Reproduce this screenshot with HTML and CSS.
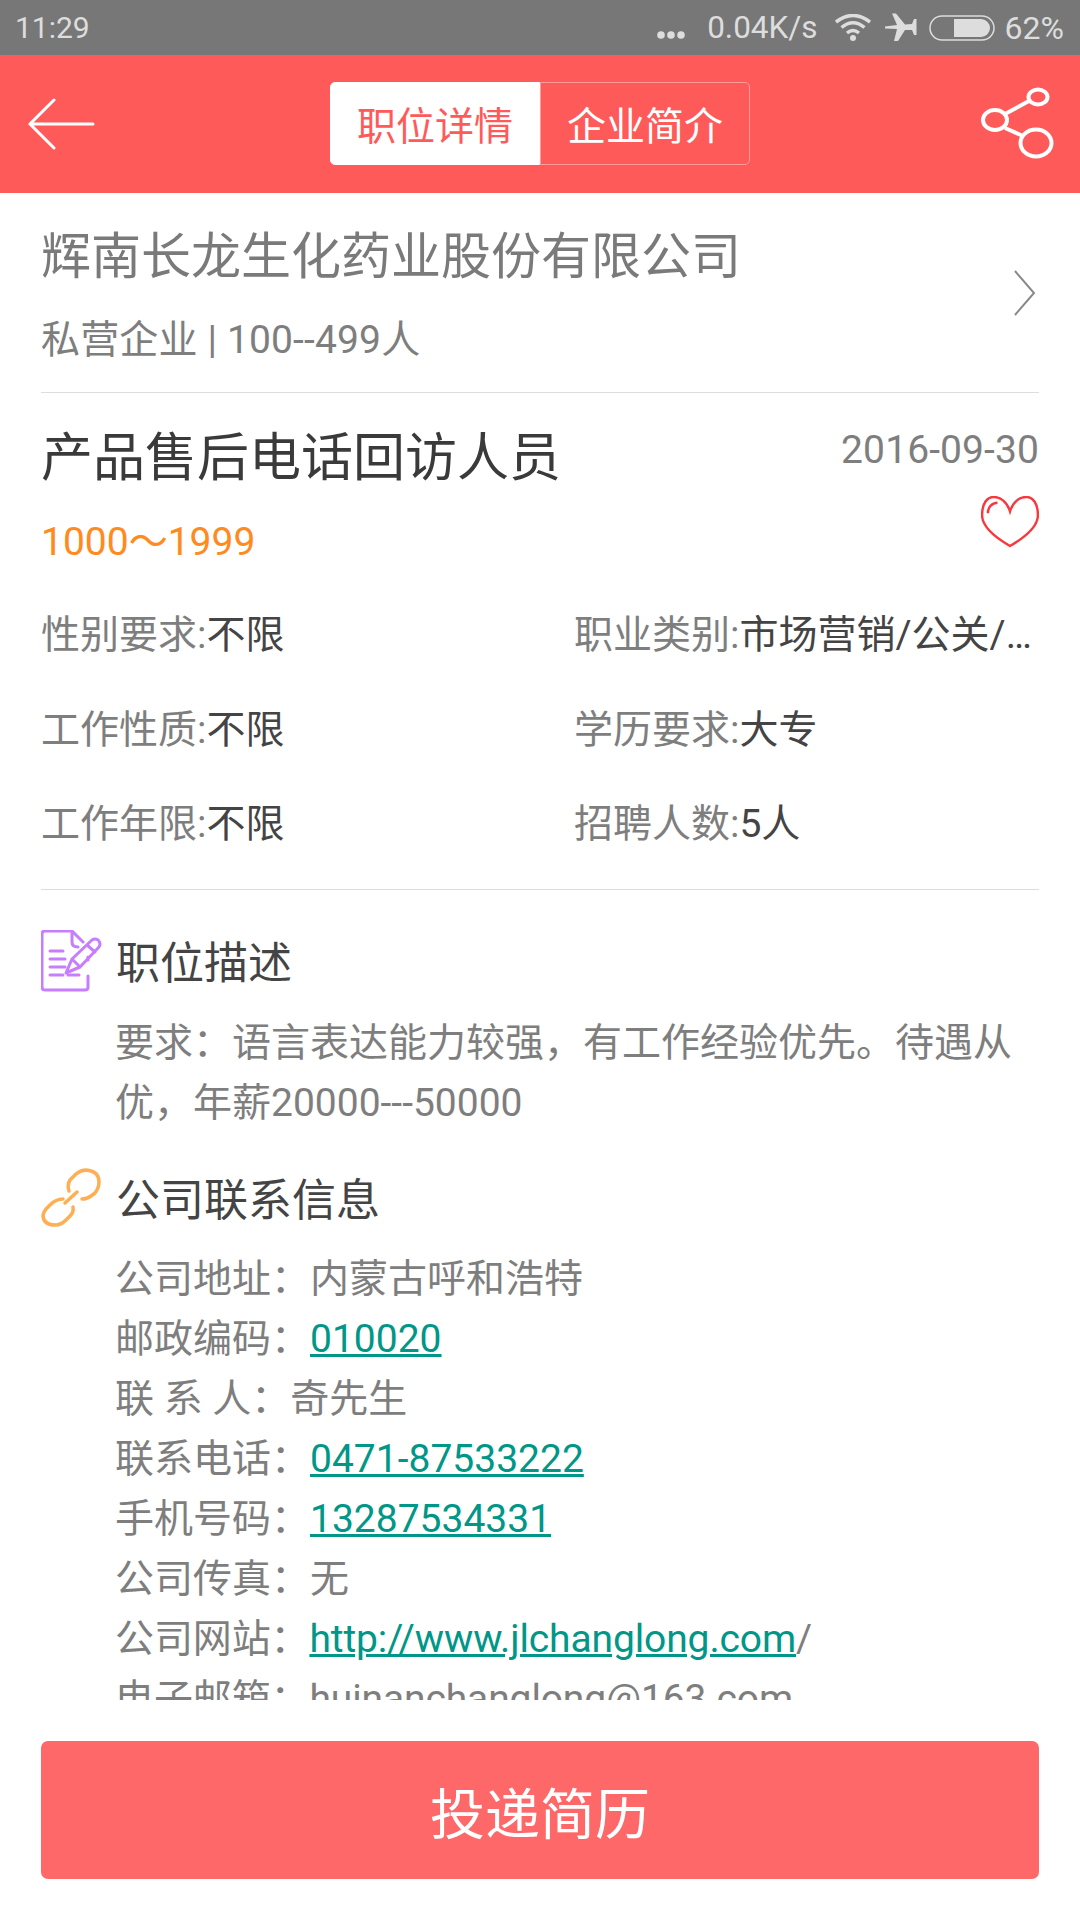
FILE: index.html
```html
<!DOCTYPE html>
<html lang="zh-CN">
<head>
<meta charset="utf-8">
<title>职位详情</title>
<link rel="stylesheet" href="styles.css">
</head>
<body>
<div class="app">
  <div class="status">
    <span class="time">11:29</span>
    <div class="status-right">
      <svg class="dots" width="30" height="10" viewBox="0 0 30 10"><circle cx="5" cy="5" r="3.8"/><circle cx="15" cy="5" r="3.8"/><circle cx="25" cy="5" r="3.8"/></svg>
      <span class="speed">0.04K/s</span>
      <svg class="wifi" width="36" height="28" viewBox="0 0 36 28"><path d="M1 8 Q18 -5 35 8" /><path d="M6.500 13.500 Q18 4 29.500 13.500"/><path d="M12 19 Q18 14 24 19"/><circle class="fill" cx="18" cy="24" r="3"/></svg>
      <svg class="plane" width="32" height="30" viewBox="0 0 32 30"><path d="M0 13.500 L12 12 L7 0.500 L11 0.500 L20 11.500 L27 11 L29 6 L31.500 6 L31.500 22 L29 22 L27 17 L20 17 L13 28 L9 28 L12 16 L0 15.500Z"/></svg>
      <svg class="battery" width="66" height="26" viewBox="0 0 66 26"><rect class="shell" x="1" y="1" width="64" height="24" rx="12"/><path class="level" d="M25 4 H52 a9 9 0 0 1 0 18 H25Z"/></svg>
      <span class="pct">62%</span>
    </div>
  </div>

  <header class="topbar">
    <svg class="back" width="68" height="52" viewBox="0 0 68 52"><path d="M66 26 H3 M27 2 L3 26 L27 50"/></svg>
    <div class="tabs">
      <div class="tab tab-on">职位详情</div>
      <div class="tab">企业简介</div>
    </div>
    <svg class="share" width="74" height="74" viewBox="-2 0 74 74"><ellipse cx="56" cy="10" rx="9.500" ry="7.500"/><ellipse cx="13" cy="33" rx="12" ry="10"/><ellipse cx="54" cy="56" rx="15.500" ry="13.500"/><path d="M23 27 L47 14 M23 41 L41 49"/></svg>
  </header>

  <main class="body">
    <section class="company">
      <div class="company-text">
        <h1 class="company-name">辉南长龙生化药业股份有限公司</h1>
        <p class="company-meta">私营企业 | 100--499人</p>
      </div>
      <svg class="chev" width="24" height="48" viewBox="0 0 24 48"><path d="M2 2 L21 24 L2 46"/></svg>
    </section>

    <section class="job">
      <div class="job-top">
        <div>
          <h2 class="job-title">产品售后电话回访人员</h2>
          <p class="salary">1000～1999</p>
        </div>
        <div class="job-side">
          <span class="date">2016-09-30</span>
          <svg class="heart" width="58" height="52" viewBox="0 0 60 54"><path d="M30 16 C27 6 20 1 13 1 C6 1 1 8 1 20 C1 33 18 45 30 52 C42 45 59 33 59 20 C59 8 54 1 47 1 C40 1 33 6 30 16Z"/><path d="M7 18 C7 12 11 7 17 7"/></svg>
        </div>
      </div>
      <div class="facts">
        <div class="fact"><span class="fact-k">性别要求:</span><span class="fact-v">不限</span></div>
        <div class="fact"><span class="fact-k">职业类别:</span><span class="fact-v">市场营销/公关/…</span></div>
        <div class="fact"><span class="fact-k">工作性质:</span><span class="fact-v">不限</span></div>
        <div class="fact"><span class="fact-k">学历要求:</span><span class="fact-v">大专</span></div>
        <div class="fact"><span class="fact-k">工作年限:</span><span class="fact-v">不限</span></div>
        <div class="fact"><span class="fact-k">招聘人数:</span><span class="fact-v">5人</span></div>
      </div>
    </section>

    <section class="block block-desc">
      <div class="block-head">
        <svg class="ico" width="62" height="62" viewBox="0 0 62 62"><path class="purple" d="M47 46 V57 Q47 60 44 60 H4 Q1 60 1 57 V4 Q1 1 4 1 H31 L42 12 M31 1 V12 Q31 17 37 17 M47 30 V27"/><path class="purple" d="M9 21 H22 M9 29 H24 M9 37 H24 M9 45 H22 M27 45 H38"/><path class="purple" d="M25 43 L31 29 L51 10 Q54 8 57 10 L58 11 Q60 14 58 17 L39 37Z M46 15 L54 22 M31 29 L39 37"/></svg>
        <h3 class="block-title">职位描述</h3>
      </div>
      <p class="block-text">要求：语言表达能力较强，有工作经验优先。待遇从优，年薪20000---50000</p>
    </section>

    <section class="block block-contact">
      <div class="block-head">
        <svg class="ico" width="62" height="62" viewBox="0 0 62 62"><path class="orange" d="M28 23 Q26 17 29 12 L35 6 Q40 2 45 2 Q58 3 58 14 Q58 20 54 25 L50 28 Q46 31 41 31 M22 31 Q15 31 9 37 L5 41 Q2 45 2 48 Q3 57 14 57 Q20 57 25 52 L29 48 Q33 44 32 39 M24 35 L36 24"/></svg>
        <h3 class="block-title">公司联系信息</h3>
      </div>
      <div class="contact-list">
        <div>公司地址：内蒙古呼和浩特</div>
        <div>邮政编码：<a class="link">010020</a></div>
        <div>联 系 人：奇先生</div>
        <div>联系电话：<a class="link">0471-87533222</a></div>
        <div>手机号码：<a class="link">13287534331</a></div>
        <div>公司传真：无</div>
        <div class="tight">公司网站：<a class="link">http://www.jlchanglong.com</a>/</div>
        <div class="tight">电子邮箱：huinanchanglong@163.com</div>
      </div>
    </section>
  </main>

  <footer class="foot">
    <button class="apply">投递简历</button>
  </footer>
</div>
</body>
</html>
```
FILE: styles.css
```css
* { box-sizing: border-box; margin: 0; padding: 0; }
html, body { width: 1080px; height: 1920px; overflow: hidden; background: #fff; }
body { font-family: Roboto, "Noto Sans CJK SC", sans-serif; color: #7e7e7e; }
.app { width: 1080px; height: 1920px; display: flex; flex-direction: column; }

.status { height: 55px; flex: none; background: #777; color: #ddd; display: flex; align-items: center; justify-content: space-between; padding: 0 16px 0 15px; font-size: 32px; }
.time { font-size: 30px; }
.status-right { display: flex; align-items: center; }
.dots { fill: #ddd; margin: 14px 21px 0 0; }
.speed { margin-right: 17px; font-size: 31.500px; }
.wifi { margin-right: 14px; }
.wifi path { fill: none; stroke: #ddd; stroke-width: 3.500; }
.wifi .fill { fill: #ddd; }
.plane { fill: #ddd; margin-right: 12px; }
.battery { margin-right: 10px; }
.shell { fill: none; stroke: #ddd; stroke-width: 1.500; }
.level { fill: #ddd; }

.topbar { height: 138px; flex: none; background: #ff5a5a; display: flex; align-items: center; justify-content: space-between; padding: 0 26px 0 27px; }
.back { fill: none; stroke: #fff; stroke-width: 3; stroke-linecap: round; }
.tabs { display: flex; margin: 0 0 2px 5px; }
.tab { width: 210px; height: 83px; border: 1px solid #ff9c9c; border-radius: 0 5px 5px 0; color: #fff; font-size: 39px; display: flex; align-items: center; justify-content: center; }
.tab-on { background: #fff; border-color: #fff; color: #ff5a5a; border-radius: 5px 0 0 5px; }
.share { fill: none; stroke: #fff; stroke-width: 4; }

.body { flex: 1; min-height: 0; overflow: hidden; padding: 0 41px; }

.company { height: 200px; border-bottom: 1px solid #ddd; display: flex; align-items: center; justify-content: space-between; padding-right: 2px; }
.company-text { align-self: flex-start; padding-top: 28px; }
.company-name { font-size: 50px; font-weight: 400; color: #7a7a7a; line-height: 72px; }
.company-meta { font-size: 39px; line-height: 56px; margin-top: 19px; letter-spacing: 0.15px; }
.chev { fill: none; stroke: #888; stroke-width: 2; }

.job { border-bottom: 1px solid #ddd; padding: 30px 0 4px; height: 497px; }
.job-top { display: flex; justify-content: space-between; }
.job-title { font-size: 52px; font-weight: 400; color: #3a3a3a; line-height: 72px; }
.salary { font-size: 39px; color: #ff8a1e; line-height: 56px; margin-top: 19px; }
.job-side { display: flex; flex-direction: column; align-items: flex-end; padding-top: 1px; }
.date { font-size: 39px; line-height: 52px; letter-spacing: 0.1px; }
.heart { fill: none; stroke: #f8383c; stroke-width: 2.500; margin-top: 20px; }
.facts { display: grid; grid-template-columns: 533px 1fr; grid-auto-rows: 94.500px; margin-top: 14px; }
.fact { font-size: 39px; display: flex; align-items: center; white-space: nowrap; }
.fact-v { color: #444; }

.block-desc { padding-top: 40px; }
.block-contact { padding-top: 32px; }
.block-head { display: flex; align-items: center; height: 62px; }
.block-desc .block-title { margin-top: -2px; }
.block-contact .block-title { margin-top: 2px; }
.block-contact .ico { margin-top: 6px; }
.ico { flex: none; margin-right: 13px; }
.purple { fill: none; stroke: #c77dff; stroke-width: 3; stroke-linecap: round; stroke-linejoin: round; }
.orange { fill: none; stroke: #ffae52; stroke-width: 3.500; stroke-linecap: round; stroke-linejoin: round; }
.block-title { font-size: 44px; font-weight: 400; color: #444; }
.block-text { font-size: 39px; line-height: 60px; padding-left: 74px; margin-top: 21px; }
.contact-list { font-size: 39px; line-height: 60px; padding-left: 74px; margin-top: 22px; }
.tight { letter-spacing: -0.12px; }
.link { color: #009688; text-decoration: underline; }

.foot { flex: none; height: 220px; padding: 41px 41px 41px; background: #fff; }
.apply { display: block; width: 100%; height: 138px; border: 0; border-radius: 7px; background: #ff6868; color: #fff; font: inherit; font-size: 55px; }
```
